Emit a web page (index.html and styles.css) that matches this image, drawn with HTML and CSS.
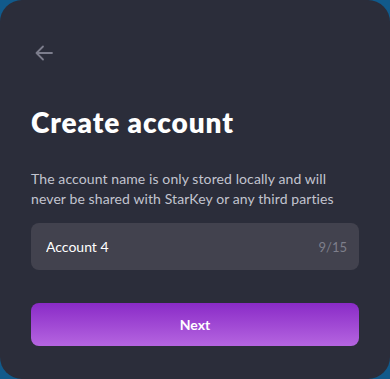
FILE: index.html
```html
<!DOCTYPE html>
<html lang="en">
<head>
    <meta charset="UTF-8">
    <meta name="viewport" content="width=device-width, initial-scale=1.0">
    <title>Create account</title>
    <link rel="stylesheet" href="styles.css">
</head>
<body>

    <div class="card">
        <button class="back" aria-label="Back">
            <svg width="18" height="18" viewBox="0 0 18 18" fill="none" stroke="#7c7d8c" stroke-width="1.8" stroke-linecap="round" stroke-linejoin="round">
                <path d="M17 9H1.5M8 2.5L1.5 9l6.5 6.5"/>
            </svg>
        </button>

        <h1>Create account</h1>
        <p class="info">The account name is only stored locally and will never be shared with StarKey or any third parties</p>

        <div class="field">
            <input type="text" value="Account 4" maxlength="15">
            <span class="count">9/15</span>
        </div>

        <button class="next">Next</button>
    </div>

</body>
</html>
```

FILE: styles.css
```css
body {
    margin: 0;
    background-color: #115a8b;
    font-family: Lato, "Open Sans", sans-serif;
}
.card {
    box-sizing: border-box;
    width: 390px;
    height: 379px;
    padding: 44px 31px 0;
    background-color: #2b2d3a;
    border-radius: 22px;
}
.back {
    display: block;
    width: 20px;
    height: 20px;
    padding: 0;
    margin-left: 3px;
    background: none;
    border: none;
    cursor: pointer;
}
h1 {
    margin: 42px 0 0;
    font-size: 28px;
    font-weight: 800;
    line-height: 32px;
    letter-spacing: 0.9px;
    color: #ffffff;
}
.info {
    margin: 31px 0 0;
    font-size: 14px;
    line-height: 20px;
    letter-spacing: 0.1px;
    color: #c2c4cf;
}
.field {
    display: flex;
    align-items: center;
    height: 47px;
    margin-top: 14px;
    padding: 0 12px 0 15px;
    background-color: #42424e;
    border-radius: 8px;
}
.field input {
    flex: 1;
    min-width: 0;
    padding: 0;
    background: none;
    border: none;
    outline: none;
    font-family: inherit;
    font-size: 14px;
    color: #ffffff;
}
.count {
    font-size: 13px;
    color: #7e7f8b;
}
.next {
    display: block;
    width: 100%;
    height: 43px;
    margin-top: 33px;
    background: linear-gradient(180deg, #8a2bc7 0%, #b565e0 100%);
    border: none;
    border-radius: 8px;
    font-family: inherit;
    font-size: 14px;
    font-weight: 700;
    color: #ffffff;
    cursor: pointer;
}
```
